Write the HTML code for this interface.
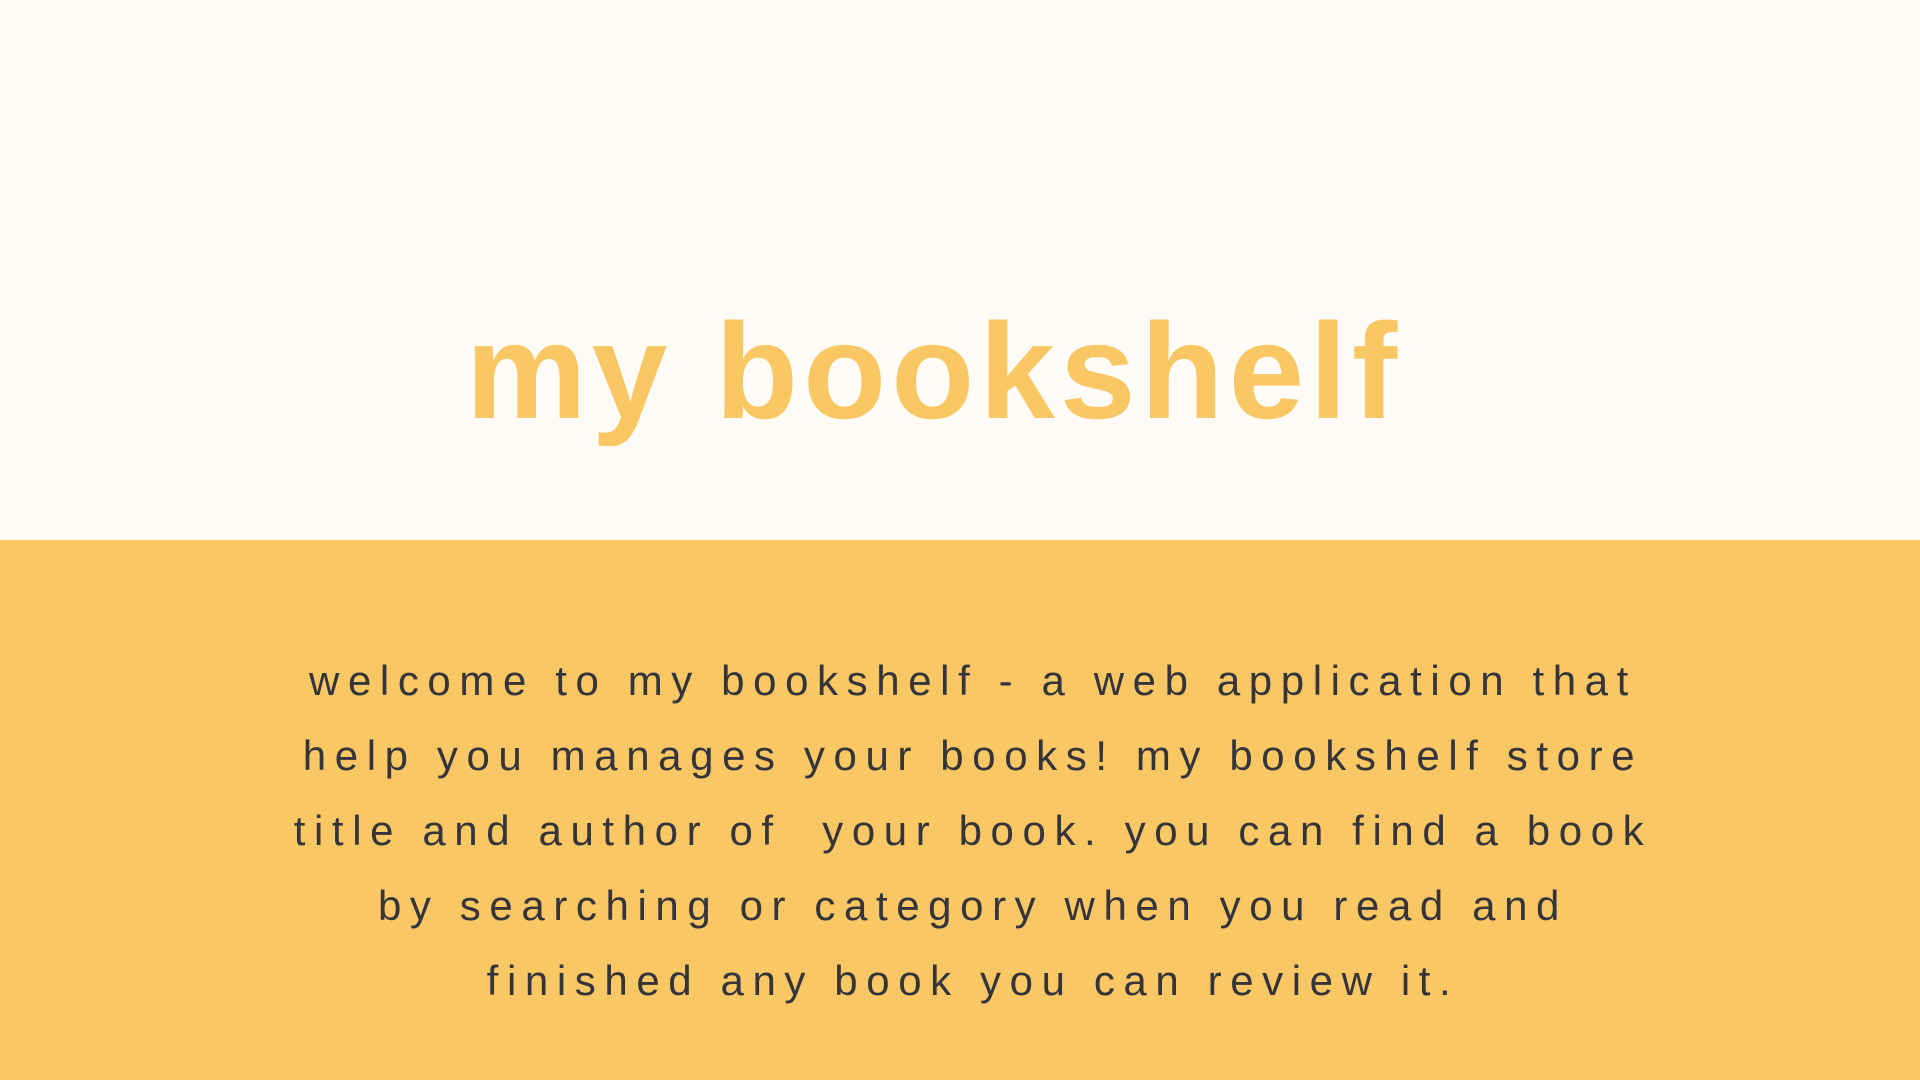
<!DOCTYPE html>
<html><head><meta charset="utf-8"><style>
html,body{margin:0;padding:0;width:1920px;height:1080px;overflow:hidden;background:#fffcf7;}
.top{position:absolute;left:0;top:0;width:1920px;height:540px;background:#fffcf7;}
h1{position:absolute;left:0;width:1920px;top:271px;margin:0;text-align:center;font-family:"Liberation Sans",sans-serif;font-weight:bold;font-size:136px;line-height:200px;letter-spacing:5px;color:#f9c865;padding-right:52px;box-sizing:border-box;}
.bot{position:absolute;left:0;top:540px;width:1920px;height:540px;background:#f9c865;}
p{position:absolute;left:0;width:1920px;top:103px;margin:0;text-align:center;font-family:"Liberation Sans",sans-serif;font-size:42px;line-height:75px;letter-spacing:8.6px;color:#34343a;padding-left:26px;box-sizing:border-box;}
</style></head><body>
<div class="top"><h1>my bookshelf</h1></div>
<div class="bot"><p>welcome to my bookshelf - a web application that<br>help you manages your books! my bookshelf store<br>title and author of &nbsp;your book. you can find a book<br>by searching or category when you read and<br>finished any book you can review it.</p></div>
</body></html>
